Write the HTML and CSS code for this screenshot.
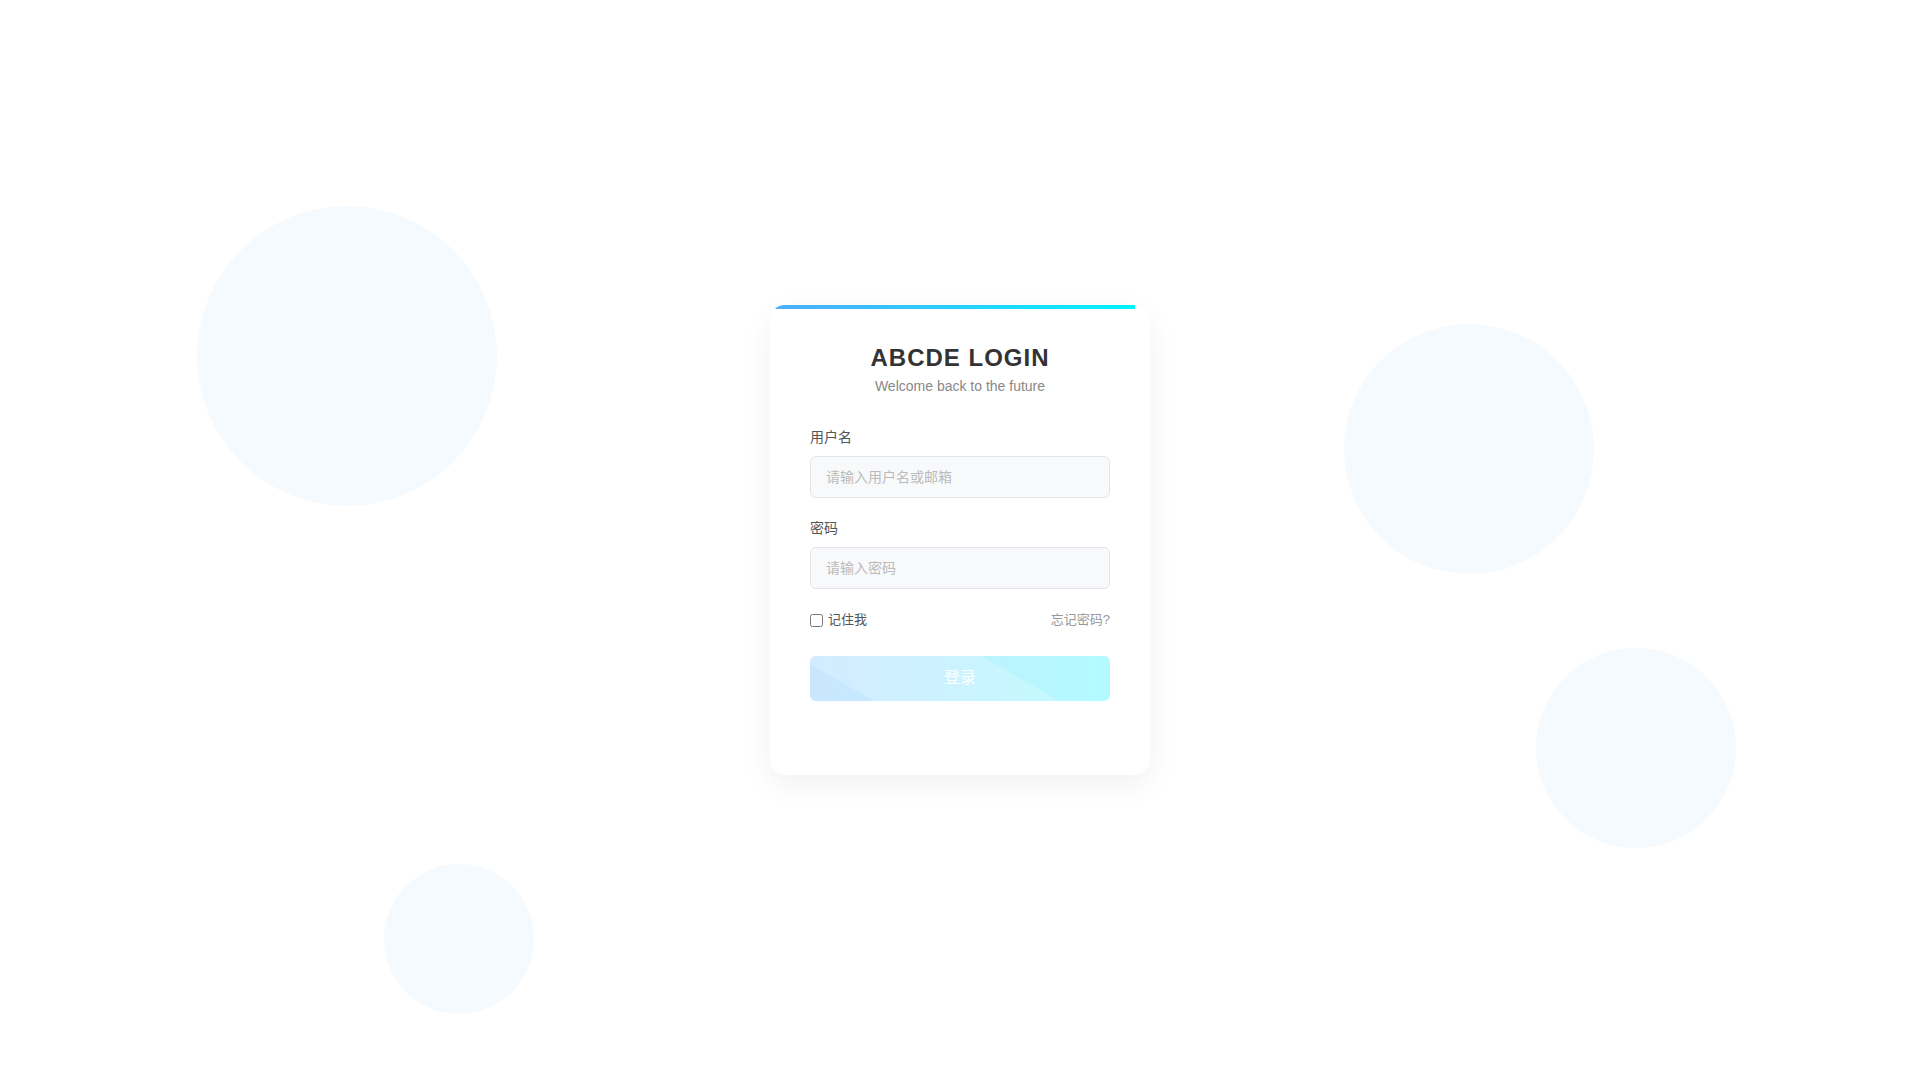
FILE: index.html
```html
<!DOCTYPE html>
<html lang="zh-CN">
<head>
<meta charset="utf-8">
<title>ABCDE LOGIN</title>
<link rel="stylesheet" href="styles.css">
</head>
<body>
<div class="bg">
  <span class="circle c1"></span>
  <span class="circle c2"></span>
  <span class="circle c3"></span>
  <span class="circle c4"></span>
</div>
<main class="card">
  <div class="card-bar"></div>
  <header class="card-header">
    <h1 class="title">ABCDE LOGIN</h1>
    <p class="subtitle">Welcome back to the future</p>
  </header>
  <form class="form">
    <div class="field">
      <label class="label" for="username">用户名</label>
      <input class="input" id="username" type="text" placeholder="请输入用户名或邮箱">
    </div>
    <div class="field">
      <label class="label" for="password">密码</label>
      <input class="input" id="password" type="password" placeholder="请输入密码">
    </div>
    <div class="options">
      <label class="remember"><input type="checkbox" class="check"><span>记住我</span></label>
      <a class="forgot" href="#">忘记密码?</a>
    </div>
    <button class="submit" type="button"><span>登录</span></button>
  </form>
</main>
</body>
</html>
```

FILE: styles.css
```css
* { box-sizing: border-box; }

html, body {
  margin: 0;
  padding: 0;
}

body {
  height: 100vh;
  background: #ffffff;
  font-family: "Liberation Sans", Arial, "Noto Sans CJK SC", sans-serif;
  display: flex;
  align-items: center;
  justify-content: center;
  overflow: hidden;
  position: relative;
}

.bg {
  position: absolute;
  inset: 0;
  pointer-events: none;
}

.circle {
  position: absolute;
  border-radius: 50%;
  background: #f5faff;
}
.c1 { left: 197px; top: 206px; width: 300px; height: 300px; }
.c2 { left: 1344px; top: 324px; width: 250px; height: 250px; }
.c3 { left: 1536px; top: 648px; width: 200px; height: 200px; }
.c4 { left: 384px; top: 864px; width: 150px; height: 150px; }

.card {
  position: relative;
  width: 380px;
  background: #ffffff;
  border-radius: 15px;
  padding: 40px 40px 74px;
  box-shadow: 0 10px 30px rgba(0, 0, 0, 0.06);
  overflow: hidden;
  z-index: 1;
}

.card-bar {
  position: absolute;
  top: 0;
  left: 0;
  width: calc(100% - 15px);
  height: 4px;
  background: linear-gradient(90deg, #4facfe, #00f2fe);
}

.card-header {
  text-align: center;
  margin-bottom: 33px;
}

.title {
  margin: 0 0 7px;
  font-size: 24px;
  line-height: 26px;
  font-weight: 700;
  color: #333333;
  letter-spacing: 1px;
}

.subtitle {
  margin: 0;
  font-size: 14px;
  line-height: 16px;
  color: #888888;
}

.form {
  display: flex;
  flex-direction: column;
}

.field {
  display: flex;
  flex-direction: column;
  margin-bottom: 20px;
}
.field + .field { margin-bottom: 0; }

.label {
  font-size: 14px;
  line-height: 20px;
  color: #555555;
  margin-bottom: 9px;
}

.input {
  height: 42px;
  width: 100%;
  padding: 0 15px;
  border: 1px solid #e1e4e8;
  border-radius: 6px;
  background: #f8f9fa;
  font-family: "Liberation Sans", Arial, "Noto Sans CJK SC", sans-serif;
  font-size: 14px;
  color: #333333;
  outline: none;
}
.input::placeholder { color: #bbbbbb; }

.options {
  margin-top: 21px;
  height: 20px;
  display: flex;
  align-items: center;
  justify-content: space-between;
  font-size: 13px;
  line-height: 20px;
}

.remember {
  display: flex;
  align-items: center;
  gap: 5px;
  color: #555555;
}

.check {
  margin: 0;
  width: 13px;
  height: 13px;
}

.forgot {
  color: #999999;
  text-decoration: none;
}

.submit {
  position: relative;
  margin-top: 26px;
  height: 45px;
  width: 100%;
  padding: 0 0 1px;
  border: none;
  border-radius: 6px;
  background: linear-gradient(90deg, #cae6ff, #b2fbff);
  color: #ffffff;
  font-family: "Liberation Sans", Arial, "Noto Sans CJK SC", sans-serif;
  font-size: 16px;
  line-height: 20px;
  overflow: hidden;
  cursor: pointer;
}
.submit::before {
  content: "";
  position: absolute;
  inset: 0;
  background: linear-gradient(30deg, transparent 17%, rgba(255, 255, 255, 0.2) 17%, rgba(255, 255, 255, 0.2) 66%, transparent 66%);
}
.submit span { position: relative; }
```
